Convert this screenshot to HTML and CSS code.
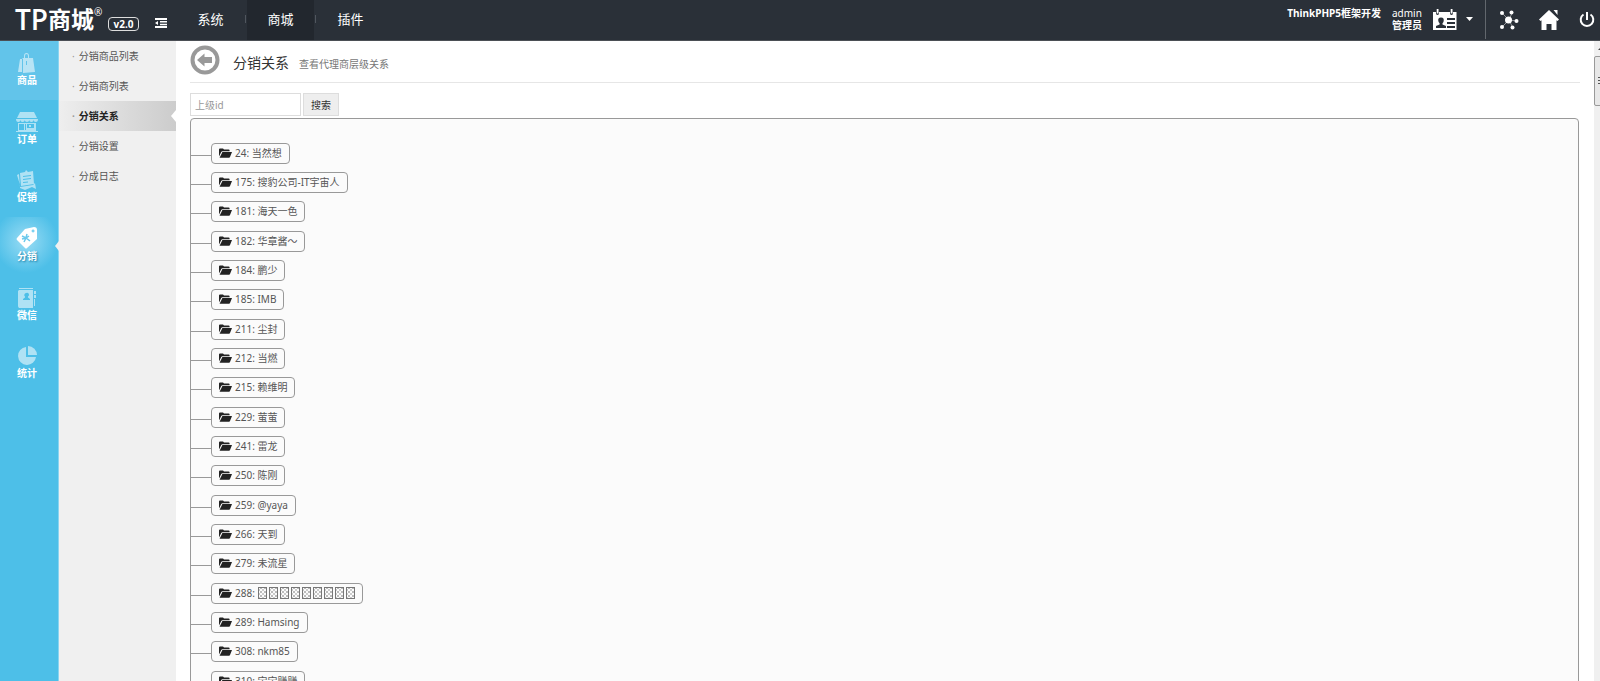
FILE: index.html
```html
<!DOCTYPE html>
<html lang="zh-CN">
<head>
    <meta charset="UTF-8">
    <title>TP商城 - 分销关系</title>
    <link rel="stylesheet" href="styles.css">
</head>
<body>
    <svg width="0" height="0" class="defs">
        <symbol id="folder" viewBox="0 0 13 10">
            <path d="M0 8.5V1.6Q0 .6 1 .6h3l1 1h4.600q1 0 1 1v.6H3.400Q2.600 3.200 2.200 4z"/>
            <path d="M3.400 4H13l-2 5q-.3.7-1 .7H.6z"/>
        </symbol>
    </svg>

    <header class="header">
        <div class="logo">
            <span class="logo-tp">TP</span><span class="logo-name">商城</span><span class="logo-reg">®</span>
        </div>
        <span class="version">v2.0</span>
        <button class="fold" type="button" aria-label="菜单">
            <svg width="12" height="10" viewBox="0 0 12 10"><path d="M0 0h12v2H0zM5 3h7v1.500H5zM5 5.700h7v1.500H5zM0 8h12v2H0zM0 5l3-2v4z"/></svg>
        </button>
        <nav class="top-nav">
            <a href="#">系统</a>
            <a href="#" class="active">商城</a>
            <a href="#">插件</a>
        </nav>
        <div class="account">
            <strong class="framework">ThinkPHP5框架开发</strong>
            <div class="user">
                <span>admin</span>
                <strong>管理员</strong>
            </div>
            <button class="user-menu" type="button" aria-label="账号">
                <svg width="24" height="21" viewBox="0 0 24 21">
                    <path fill-rule="evenodd" d="M0 3h3v2q1.500 2 3 0V3h11v2q1.500 2 3 0V3h3.500v18H0zM8 8.500C5.500 8.500 5 10 5.300 12q.3 1.500 1.300 2.300v1.200L3 17v2h10v-2l-3.500-1.500v-1.200q1-.8 1.200-2.300C11 10 10.500 8.500 8 8.500zM14 9v2h8V9zM14 13v2h8v-2zM14 17v2h8v-2z"/>
                    <path d="M3.700 0h1.800v4.500H3.700zM17.700 0h1.800v4.500h-1.800z"/>
                </svg>
                <svg class="caret" width="7" height="4" viewBox="0 0 7 4"><path d="M0 0h7L3.500 4z"/></svg>
            </button>
        </div>
        <div class="tools">
            <a href="#" aria-label="缓存">
                <svg width="20" height="20" viewBox="0 0 20 20">
                    <path class="stroke" d="M3 3l7 7 3-7M10 10l8 1M10 10l-7 7M10 10l4 8"/>
                    <circle cx="9.500" cy="10" r="3.500"/><circle cx="3" cy="3" r="2"/><circle cx="12.500" cy="2.500" r="2"/>
                    <circle cx="17.500" cy="11" r="2"/><circle cx="3" cy="17" r="2"/><circle cx="13.500" cy="17.500" r="2"/>
                </svg>
            </a>
            <a href="#" aria-label="首页">
                <svg width="20" height="20" viewBox="0 0 20 20"><path d="M10 0l10 9.500-1.500 1.500-1-.7V20h-5v-6h-5v6h-5v-9.700l-1 .7L0 9.500zM14.500 0h4v5z"/></svg>
            </a>
            <a href="#" aria-label="退出">
                <svg width="16" height="16" viewBox="0 0 16 16"><path class="power" d="M8 0v8M4.500 2.500a6.300 6.300 0 1 0 7 0"/></svg>
            </a>
        </div>
    </header>

    <div class="wrap">
        <nav class="side">
            <a href="#" class="first">
                <svg width="20" height="20" viewBox="0 0 20 20"><path fill-rule="evenodd" d="M5 5h2V3q0-3 2.500-3T12 3v2h4l2 14-12 1V6zM8 5h3V3q0-2-1.500-2T8 3zM9 8v4h1V8z"/><path d="M3 6h2v13H1z"/></svg>
                商品
            </a>
            <a href="#">
                <svg width="22" height="20" viewBox="0 0 22 20"><path d="M4 0h14l3 6H1z"/><path d="M0 7h22q0 3-2.200 3t-2.200-2q0 2-2.200 2t-2.200-2q0 2-2.200 2T8.800 8q0 2-2.200 2T4.400 8q0 2-2.200 2T0 7z"/><path fill-rule="evenodd" d="M2 11h18v8H2zM3 12v6h5v-6zM9 12v6h1v-6zM11 12v4h7v-4z"/><path d="M0 19h22v1H0zM13 13h2v2h-2z"/></svg>
                订单
            </a>
            <a href="#">
                <svg width="20" height="20" viewBox="0 0 20 20"><path fill-rule="evenodd" d="M3 3l5-1 1-2 2 2 5-1 1 13-13 2zM6 6l8-1v1L6 7zM6 9l8-1v1l-8 1zM6 12l5-.5v1L6 13z"/><path d="M0 5l2-1 1 13 13-2 2-2 1 6-4-2-7 3-5-2 0-3z"/></svg>
                促销
            </a>
            <a href="#" class="active">
                <svg width="22" height="22" viewBox="0 0 22 22"><path fill-rule="evenodd" d="M9 2L18 0q3 0 3 3v9L11 21q-1 1-2 0L1 13q-1-1 0-2zM17 2.500a1.500 1.500 0 1 0 .1 0z"/><path class="mark" d="M6 9l4 2 4 3M11 7l-1 4-2 4M13 9l-3 2-4 1"/></svg>
                分销
            </a>
            <a href="#">
                <svg width="20" height="20" viewBox="0 0 20 20"><path fill-rule="evenodd" d="M2 2h14v18H2q-1-1-1-2V3zM9 5a2 2 0 0 0-1 3.500v1L6 11v1h7v-1l-2-1.500v-1A2 2 0 0 0 9 5z"/><path d="M2 0h14v1H2zM17 3h2v3h-2zM17 7h2v3h-2zM17 11h1v7h-1z"/></svg>
                微信
            </a>
            <a href="#">
                <svg width="20" height="20" viewBox="0 0 20 20"><path d="M9 1v10h10A9 9 0 1 1 9 1z"/><path d="M11 0a9 9 0 0 1 9 9h-9z"/></svg>
                统计
            </a>
        </nav>

        <nav class="submenu">
            <a href="#">分销商品列表</a>
            <a href="#">分销商列表</a>
            <a href="#" class="active">分销关系</a>
            <a href="#">分销设置</a>
            <a href="#">分成日志</a>
        </nav>

        <main class="main">
            <div class="page-title">
                <a href="#" class="back" aria-label="返回">
                    <svg width="30" height="30" viewBox="0 0 30 30"><circle cx="15" cy="15" r="12.500"/><path d="M7 15l7.500-6.500V12H22v6h-7.500v3.500z"/></svg>
                </a>
                <h1>分销关系</h1>
                <span>查看代理商层级关系</span>
            </div>
            <form class="search">
                <input type="text" placeholder="上级id" aria-label="上级id">
                <button type="submit">搜索</button>
            </form>
            <ul class="tree">
                <li><a href="#"><svg><use href="#folder"/></svg>24: 当然想</a></li>
                <li><a href="#"><svg><use href="#folder"/></svg>175: 搜豹公司-IT宇宙人</a></li>
                <li><a href="#"><svg><use href="#folder"/></svg>181: 海天一色</a></li>
                <li><a href="#"><svg><use href="#folder"/></svg>182: 华章酱～</a></li>
                <li><a href="#"><svg><use href="#folder"/></svg>184: 鹏少</a></li>
                <li><a href="#"><svg><use href="#folder"/></svg>185: IMB</a></li>
                <li><a href="#"><svg><use href="#folder"/></svg>211: 尘封</a></li>
                <li><a href="#"><svg><use href="#folder"/></svg>212: 当燃</a></li>
                <li><a href="#"><svg><use href="#folder"/></svg>215: 赖维明</a></li>
                <li><a href="#"><svg><use href="#folder"/></svg>229: 萤萤</a></li>
                <li><a href="#"><svg><use href="#folder"/></svg>241: 雷龙</a></li>
                <li><a href="#"><svg><use href="#folder"/></svg>250: 陈刚</a></li>
                <li><a href="#"><svg><use href="#folder"/></svg>259: @yaya</a></li>
                <li><a href="#"><svg><use href="#folder"/></svg>266: 天到</a></li>
                <li><a href="#"><svg><use href="#folder"/></svg>279: 未流星</a></li>
                <li><a href="#"><svg><use href="#folder"/></svg>288: <span class="noglyph"><i></i><i></i><i></i><i></i><i></i><i></i><i></i><i></i><i></i></span></a></li>
                <li><a href="#"><svg><use href="#folder"/></svg>289: Hamsing</a></li>
                <li><a href="#"><svg><use href="#folder"/></svg>308: nkm85</a></li>
                <li><a href="#"><svg><use href="#folder"/></svg>310: 宝宝赚赚</a></li>
            </ul>
        </main>

        <div class="scrollbar">
            <svg width="12" height="15" viewBox="0 0 12 15"><path d="M4 9l4-4 4 4z"/></svg>
            <div class="thumb"><i></i></div>
        </div>
    </div>
</body>
</html>
```

FILE: styles.css
```css
* {
    box-sizing: border-box;
}
body {
    margin: 0;
    height: 100vh;
    overflow: hidden;
    display: flex;
    flex-direction: column;
    font-family: "Noto Sans", "Noto Sans CJK SC", sans-serif;
    font-size: 10px;
    line-height: 12px;
    color: #555;
    background-color: #fff;
}
a {
    color: inherit;
    text-decoration: none;
}
button {
    font: inherit;
    color: inherit;
    padding: 0;
    border: none;
    background: none;
    cursor: pointer;
}
svg {
    display: block;
    flex: none;
    fill: currentColor;
}
.defs {
    position: absolute;
}

/* header */
.header {
    flex: none;
    display: flex;
    height: 41px;
    color: #fff;
    background-color: #2a3038;
    border-bottom: 1px solid #4b4f55;
}
.logo {
    display: flex;
    width: 93px;
    margin-left: 15px;
    line-height: 38px;
}
.logo-tp {
    font-family: "Open Sans", sans-serif;
    font-size: 28px;
    font-weight: 600;
}
.logo-name {
    font-size: 23px;
    font-weight: bold;
}
.logo-reg {
    font-size: 10px;
    line-height: 24px;
}
.version {
    width: 31px;
    height: 14px;
    margin-top: 17px;
    border: 1px solid #ddd;
    border-radius: 4px;
    font-size: 10px;
    font-weight: bold;
    line-height: 12px;
    text-align: center;
}
.fold {
    margin: 6px 0 0 16px;
}
.top-nav {
    display: flex;
    gap: 3px;
    margin-left: 10px;
    font-size: 13px;
    line-height: 38px;
}
.top-nav a {
    position: relative;
    width: 67px;
    text-align: center;
}
.top-nav .active {
    background-color: #22272e;
}
.top-nav a + a::before {
    content: "";
    position: absolute;
    left: -2px;
    top: 15px;
    width: 1px;
    height: 8px;
    background-color: #50565e;
}
.account {
    display: flex;
    margin-left: auto;
    padding-top: 7px;
    height: 39px;
    border-right: 1px solid #62676d;
}
.user {
    display: flex;
    flex-direction: column;
    margin: 0 11px;
}
.user-menu {
    display: flex;
    align-items: center;
    gap: 9px;
    height: 24px;
    margin-right: 12px;
}
.tools {
    display: flex;
    align-items: center;
    gap: 20px;
    padding: 0 5px 0 13px;
}
.stroke {
    stroke: currentColor;
    stroke-width: 0.5;
}
.tools .stroke {
    fill: none;
}
.power {
    fill: none;
    stroke: currentColor;
    stroke-width: 2;
}

/* left columns */
.wrap {
    flex: 1;
    display: flex;
    min-height: 0;
}
.side {
    flex: none;
    width: 59px;
    color: #fff;
    background-color: #4dbfe8;
    border-right: 1px solid #8ad4f0;
}
.side a {
    position: relative;
    display: flex;
    flex-direction: column;
    align-items: center;
    justify-content: flex-end;
    gap: 1px;
    height: 59px;
    padding: 0 4px 14px 0;
    font-weight: bold;
}
.side a:nth-child(3n) {
    height: 58px;
}
.side svg {
    opacity: 0.55;
}
.side .first {
    background-color: #62c4ea;
}
.side .active {
    background-image: radial-gradient(circle at 26px 24px, #9adcf4, #4dbfe8 32px);
    text-shadow: 1px 1px 2px #1f7ea3;
}
.side .active svg {
    opacity: 1;
}
.side .active::after {
    content: "";
    position: absolute;
    right: -1px;
    top: 24px;
    border: 5px solid transparent;
    border-left: 0;
    border-right: 4px solid #f0f0f0;
}
.mark {
    fill: none;
    stroke: #6bc9ec;
    stroke-width: 1.5;
}
.submenu {
    flex: none;
    width: 117px;
    background-color: #f0f0f0;
}
.submenu a {
    position: relative;
    display: flex;
    gap: 4px;
    padding-left: 13px;
    line-height: 30px;
}
.submenu a::before {
    content: "·";
    color: #999;
}
.submenu .active {
    color: #222;
    font-weight: bold;
    background-image: linear-gradient(to right, #eee, #ccc);
}
.submenu .active::after {
    content: "";
    position: absolute;
    right: 0;
    top: 9px;
    border: 6px solid transparent;
    border-left: 0;
    border-right: 5px solid #fff;
}

/* content */
.main {
    flex: 1;
    min-width: 0;
    padding: 0 14px;
    overflow: hidden;
}
.page-title {
    display: flex;
    align-items: center;
    height: 42px;
    border-bottom: 1px solid #e6e6e6;
    color: #777;
}
.back {
    align-self: flex-start;
    padding-top: 4px;
    color: #999;
}
.back circle {
    fill: none;
    stroke: currentColor;
    stroke-width: 4;
}
.page-title h1 {
    margin: 0 10px 0 13px;
    padding-top: 3px;
    font-size: 14px;
    font-weight: normal;
    color: #333;
}
.page-title span {
    padding-top: 5px;
}
.search {
    display: flex;
    gap: 2px;
    padding: 10px 0 2px;
}
.search input {
    width: 111px;
    height: 23px;
    padding: 0 4px;
    border: 1px solid #ddd;
    font: inherit;
}
.search input::placeholder {
    color: #999;
}
.search button {
    width: 36px;
    height: 23px;
    border: 1px solid #ddd;
    background-color: #eee;
    color: #333;
}
.tree {
    margin: 0 1px 0 0;
    padding: 24px 0;
    list-style: none;
    border: 1px solid #999;
    border-radius: 4px;
    background-color: #fbfbfb;
}
.tree li {
    display: flex;
    align-items: center;
    height: 21px;
    margin-bottom: 8px;
}
/* keeps the three-row rhythm at 88px */
.tree li:nth-child(3n) {
    margin-bottom: 9px;
}
.tree li::before {
    content: "";
    width: 20px;
    height: 1px;
    margin-top: 4px;
    background-color: #999;
}
.tree a {
    display: flex;
    align-items: center;
    height: 21px;
    padding: 0 7px 1px;
    border: 1px solid #999;
    border-radius: 4px;
    white-space: pre;
}
.tree svg {
    width: 13px;
    height: 10px;
    margin-right: 3px;
    color: #222;
}
.noglyph {
    display: flex;
    gap: 2px;
    padding: 0 0 1px 1px;
}
.noglyph i {
    width: 9px;
    height: 12px;
    border: 1px solid #777;
    background: conic-gradient(#ccc 25%, #fbfbfb 0 50%, #bbb 0 75%, #fbfbfb 0) 1px 1px / 4px 4px;
}

/* scrollbar */
.scrollbar {
    flex: none;
    width: 6px;
    overflow: hidden;
    background-color: #f0f0f0;
    color: #444;
}
.thumb {
    width: 16px;
    height: 50px;
    padding: 20px 3px;
    border: 1px solid #999;
    border-radius: 2px;
    background-color: #e8e8e8;
}
.thumb i {
    display: block;
    height: 7px;
    background: repeating-linear-gradient(#555 0 1px, transparent 1px 3px);
}
```
